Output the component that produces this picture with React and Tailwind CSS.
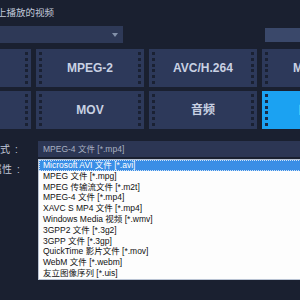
const ROW1 = ["AVI", "MPEG-2", "AVC/H.264", "MPEG-4"];
const ROW2 = ["WMV", "MOV", "音频", "自定义"];

const ITEMS = [
  "Microsoft AVI 文件 [*.avi]",
  "MPEG 文件 [*.mpg]",
  "MPEG 传输流文件 [*.m2t]",
  "MPEG-4 文件 [*.mp4]",
  "XAVC S MP4 文件 [*.mp4]",
  "Windows Media 视频 [*.wmv]",
  "3GPP2 文件 [*.3g2]",
  "3GPP 文件 [*.3gp]",
  "QuickTime 影片文件 [*.mov]",
  "WebM 文件 [*.webm]",
  "友立图像序列 [*.uis]",
];

function Holes({ selected }) {
  return (
    <div className="flex flex-col justify-between py-[3px] h-full">
      {[0, 1, 2, 3, 4, 5].map((i) => (
        <div
          key={i}
          className={`w-[3px] h-[3px] ${selected ? "bg-[#1b2a44]" : "bg-[#1a2133]"}`}
        />
      ))}
    </div>
  );
}

function Tile({ label, selected }) {
  return (
    <div
      className={`flex h-[38px] w-[108px] shrink-0 items-stretch justify-between px-[3px] ${
        selected ? "bg-[#1ba2f2] text-white" : "bg-[#2d395a] text-[#c9d1e3]"
      }`}
    >
      <Holes selected={selected} />
      <div className="flex flex-1 items-center justify-center text-[12px] font-bold">{label}</div>
      <Holes selected={selected} />
    </div>
  );
}

export default function App() {
  return (
    <div
      className="relative h-[300px] w-[300px] overflow-hidden bg-[#1a2030]"
      style={{ fontFamily: '"Liberation Sans", "Noto Sans CJK SC", sans-serif' }}
    >
      {/* heading */}
      <div className="pt-[7px] h-[19px] text-[9.5px] leading-[12px] text-[#c3cadb] whitespace-nowrap">
        <span className="ml-[-12.5px]">备上播放的视频</span>
      </div>

      {/* device select */}
      <div className="mt-[7px] flex items-start">
        <div className="flex h-[17px] w-[123px] items-center justify-end bg-[#2e3957] pr-[5px]">
          <svg width="6" height="4" viewBox="0 0 6 4">
            <path d="M0 0h6L3 4z" fill="#8391aa" />
          </svg>
        </div>
        <div className="ml-auto mt-[2px] h-[14px] w-[35px] bg-[#3a486a]" />
      </div>

      {/* format tiles */}
      <div className="mt-[6px] ml-[-77px] flex flex-col gap-[4px]">
        <div className="flex gap-[5px]">
          {ROW1.map((l) => (
            <Tile key={l} label={l} />
          ))}
        </div>
        <div className="flex gap-[5px]">
          {ROW2.map((l, i) => (
            <Tile key={l} label={l} selected={i === 3} />
          ))}
        </div>
      </div>

      {/* format row */}
      <div className="mt-[12px] flex h-[16px] items-center">
        <div className="ml-[-10px] w-[48px] shrink-0 text-[10px] text-[#c3cadb] whitespace-nowrap">
          格式<span className="ml-[5px]">:</span>
        </div>
        <div className="flex h-[16px] flex-1 items-center bg-[#2c3654] pl-[5px] text-[8.5px] text-[#a9b1c2] whitespace-nowrap">
          MPEG-4 文件 [*.mp4]
        </div>
      </div>

      {/* attributes row */}
      <div className="mt-[4px] flex h-[16px] items-center">
        <div className="ml-[-8px] text-[10px] text-[#c3cadb] whitespace-nowrap">
          属性<span className="ml-[5px]">:</span>
        </div>
      </div>

      {/* open dropdown list */}
      <div className="absolute left-[38px] top-[159px] w-[270px] border border-[#b9c3d3] bg-[#fdfdfd] text-[8.5px] text-[#111] whitespace-nowrap">
        {ITEMS.map((t, i) => (
          <div
            key={t}
            className={`flex h-[10.8px] items-center pl-[4px] ${
              i === 0 ? "bg-[#3a8ee6] text-white outline-1 outline-dotted outline-offset-[-1px] outline-[#cfe3fa]" : ""
            }`}
          >
            {t}
          </div>
        ))}
      </div>
    </div>
  );
}
